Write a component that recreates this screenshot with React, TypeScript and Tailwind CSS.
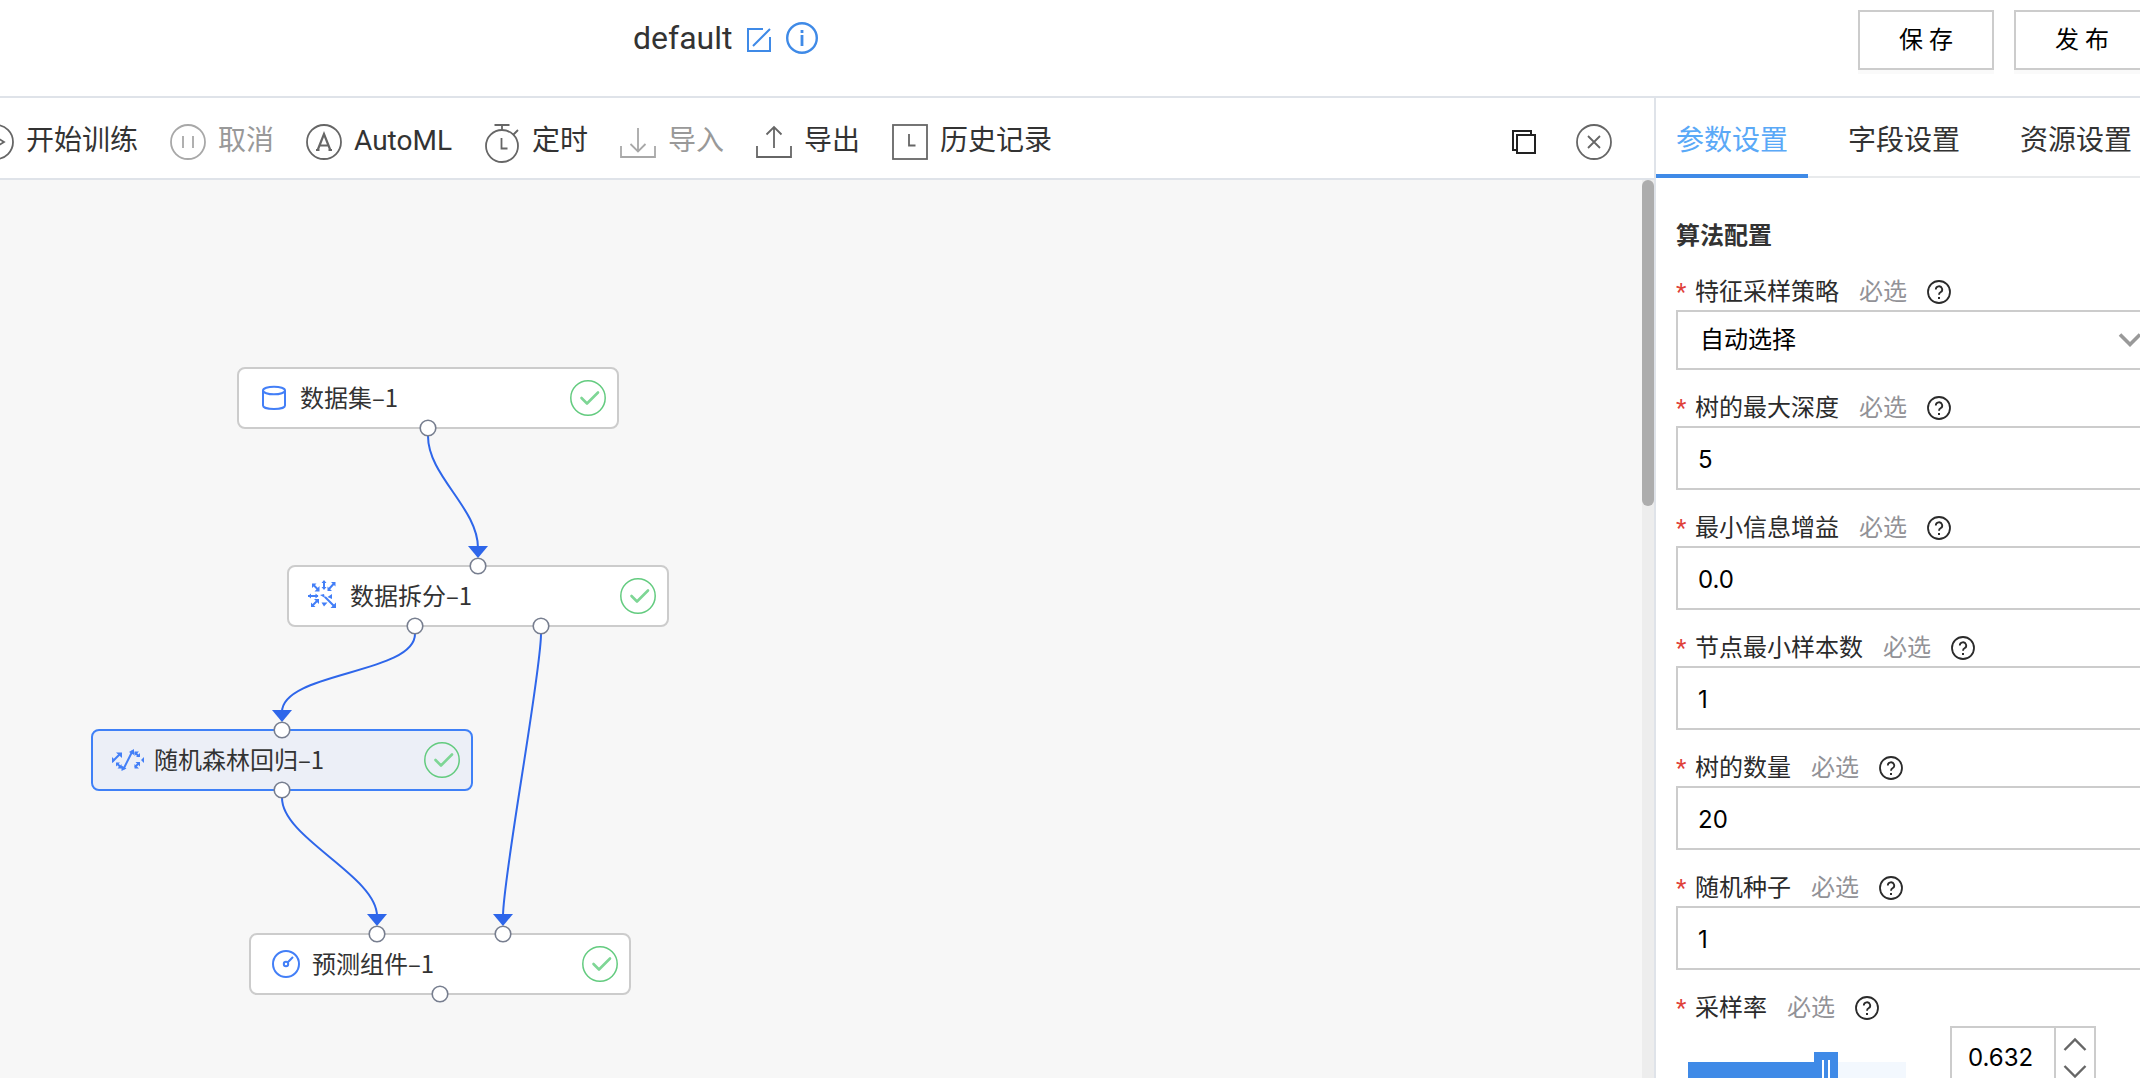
import { useState } from "react";
import type { ReactNode } from "react";

interface ToolItem {
  label: string;
  icon: ReactNode;
  disabled?: boolean;
}

interface FlowNode {
  id: string;
  label: string;
  x: number;
  y: number;
  icon: ReactNode;
  selected?: boolean;
}

const toolItems: ToolItem[] = [
  {
    label: "开始训练",
    icon: (
      <>
        <circle cx="18" cy="18" r="17" />
        <path d="M14 10.500v15L26 18z" />
      </>
    ),
  },
  {
    label: "取消",
    disabled: true,
    icon: (
      <>
        <circle cx="18" cy="18" r="17" />
        <path d="M13 12v12M23 12v12" />
      </>
    ),
  },
  {
    label: "AutoML",
    icon: (
      <>
        <circle cx="18" cy="18" r="17" />
        <path d="M11.500 26.500L18 10l6.500 16.500M14 21.500h8M10 26h3.500M22.500 26H26" strokeWidth="2.2" />
      </>
    ),
  },
  {
    label: "定时",
    icon: (
      <>
        <circle cx="18" cy="22" r="16" />
        <path d="M10.500 1h15M18 1v5M29 11l5-5M17.500 14v10.500h6" />
      </>
    ),
  },
  {
    label: "导入",
    disabled: true,
    icon: <path d="M1 22v11h34V22M18 4v23M10.500 20l7.500 7.500 7.500-7.500" />,
  },
  {
    label: "导出",
    icon: <path d="M1 22v11h34V22M18 24V3M10.500 10.500L18 3l7.500 7.500" />,
  },
  {
    label: "历史记录",
    icon: (
      <>
        <rect x="1" y="1" width="34" height="34" />
        <path d="M17 10v11.500h6.500" />
      </>
    ),
  },
];

const tabs = ["参数设置", "字段设置", "资源设置"];

const numberFields = [
  { id: "max-depth", label: "树的最大深度", value: "5" },
  { id: "min-gain", label: "最小信息增益", value: "0.0" },
  { id: "min-samples", label: "节点最小样本数", value: "1" },
  { id: "tree-count", label: "树的数量", value: "20" },
  { id: "seed", label: "随机种子", value: "1" },
];

const nodes: FlowNode[] = [
  {
    id: "dataset",
    label: "数据集–1",
    x: 237,
    y: 187,
    icon: (
      <>
        <ellipse cx="16" cy="8.500" rx="11" ry="3.800" />
        <path d="M5 8.500v15c0 2 4.900 3.500 11 3.500s11-1.500 11-3.500v-15" />
      </>
    ),
  },
  {
    id: "split",
    label: "数据拆分–1",
    x: 287,
    y: 385,
    icon: (
      <>
        <path d="M16 1v8M20.500 9.500l5.500-6M5 4.500l5.500 5.500M0 16h10M4 26l6-6M17 17l9.500 9.500" />
        <path
          d="M13.500 3L16 0l2.500 3zM13.500 7h5L16 10zM27.500 2v4.500L23 2zM19.500 6.500v4.500H24zM4 3.500h4.500L4 8zM11.500 6v5.500H6.500zM3 13.500L0 16l3 2.500zM7.500 13.500v5L10.500 16zM6 19h5v5zM3 22.500V27h4.500zM28 22.500V28h-5.500zM19.500 17l4.500-3v5zM13.500 22.500h6l-3.500 4zM12 15l4-1 1 4z"
          fill="currentColor"
          stroke="none"
        />
      </>
    ),
  },
  {
    id: "forest",
    label: "随机森林回归–1",
    x: 91,
    y: 549,
    selected: true,
    icon: (
      <>
        <path d="M0 18l8-8M5 19.500l4 4M11.500 25l9-18M23 8.500l4 4M23 23l4-4" />
        <path
          d="M0 13v6l3-3zM4 8.500h6V14zM4 18.500h4L4 22.500zM9.500 20v4.500H5.500zM17 8l5-3v6zM9.500 21.500v5.500l5-2.500zM22.500 7.500H27l-4.500 4.500zM28 9v4h-4zM28 18v4.500L23.500 18zM22.500 20v4.500H27zM32 13v6l-3-3z"
          fill="currentColor"
          stroke="none"
        />
      </>
    ),
  },
  {
    id: "predict",
    label: "预测组件–1",
    x: 249,
    y: 753,
    icon: (
      <>
        <circle cx="16" cy="16" r="13" />
        <circle cx="16" cy="16" r="2.200" />
        <path d="M17.800 14.200L23 9" />
      </>
    ),
  },
];

// source x/y, target x/y in canvas coordinates
const edges = [
  { x1: 428, y1: 256, x2: 478, y2: 378 },
  { x1: 415, y1: 454, x2: 282, y2: 542 },
  { x1: 541, y1: 454, x2: 503, y2: 746 },
  { x1: 282, y1: 618, x2: 377, y2: 746 },
];

const ports = [
  [428, 248],
  [478, 386],
  [415, 446],
  [541, 446],
  [282, 550],
  [282, 610],
  [377, 754],
  [503, 754],
  [440, 814],
];

const HANDLE = 40;

function edgePath(x1: number, y1: number, x2: number, y2: number) {
  const end = y2 - 10;
  return `M${x1} ${y1}C${x1} ${y1 + HANDLE} ${x2} ${end - HANDLE} ${x2} ${end}`;
}

function FieldLabel({ htmlFor, text }: { htmlFor: string; text: string }) {
  return (
    <div className="flex h-9 items-center text-2xl leading-9 text-[#2b2b2b]">
      <span className="w-[19px] text-[#e0413a]">*</span>
      <label htmlFor={htmlFor}>{text}</label>
      <span className="ml-5 text-[#929297]">必选</span>
      <button type="button" aria-label={`${text}说明`} className="ml-5">
        <svg viewBox="0 0 24 24" className="size-6" fill="none" stroke="currentColor" strokeWidth="1.8">
          <circle cx="12" cy="12" r="11" />
          <path d="M8.800 9.500a3.200 3.200 0 1 1 4.700 2.800c-1 .6-1.500 1.100-1.500 2.400" />
          <path d="M12 17v2" strokeWidth="2" />
        </svg>
      </button>
    </div>
  );
}

function Toolbar() {
  return (
    <div className="flex h-[82px] shrink-0 items-center border-b-2 border-[#dfe3e9] bg-white pt-2 pr-[42px]">
      <div className="-ml-6 flex items-center gap-8 pl-0.5">
        {toolItems.map((item) => (
          <button
            key={item.label}
            type="button"
            disabled={item.disabled}
            className={`flex min-w-[104px] shrink-0 items-center gap-3 ${item.disabled ? "text-[#a8a8a8]" : "text-[#666]"}`}
          >
            <svg viewBox="0 0 36 36" className="size-9 overflow-visible" fill="none" stroke="currentColor" strokeWidth="1.8">
              {item.icon}
            </svg>
            <span className={`pb-0.5 text-[28px] leading-9 ${item.disabled ? "text-[#999]" : "text-[#333]"}`}>
              {item.label}
            </span>
          </button>
        ))}
      </div>
      <div className="ml-auto flex items-center gap-10">
        <button type="button" aria-label="复制" className="text-[#222]">
          <svg viewBox="0 0 24 24" className="size-6" fill="none" stroke="currentColor" strokeWidth="2">
            <path d="M4 20H1V1h18v3" />
            <rect x="5" y="5" width="18" height="18" />
          </svg>
        </button>
        <button type="button" aria-label="关闭" className="text-[#666]">
          <svg viewBox="0 0 36 36" className="size-9" fill="none" stroke="currentColor" strokeWidth="1.800">
            <circle cx="18" cy="18" r="17" />
            <path d="M12 12l12 12M24 12L12 24" />
          </svg>
        </button>
      </div>
    </div>
  );
}

function Canvas() {
  return (
    <div className="flex min-h-0 flex-1 bg-[#f7f7f7]">
      <div className="relative flex-1 overflow-hidden">
        {nodes.map((node) => (
          <div
            key={node.id}
            style={{ left: node.x, top: node.y }}
            className={`absolute flex h-[62px] w-[382px] items-center rounded-lg border-2 pr-[11px] pl-[19px] ${
              node.selected ? "border-[#3f80f7] bg-[#eceff7]" : "border-[#ccc] bg-white"
            }`}
          >
            <svg viewBox="0 0 32 32" className="size-8 shrink-0 text-[#437ff7]" fill="none" stroke="currentColor" strokeWidth="2">
              {node.icon}
            </svg>
            <span className="ml-2.5 flex-1 pb-0.5 font-['Noto_Sans_CJK_SC',sans-serif] text-2xl leading-9 text-[#333]">
              {node.label}
            </span>
            <svg viewBox="0 0 36 36" className="size-9 shrink-0" fill="none" strokeLinecap="round" strokeLinejoin="round">
              <circle cx="18" cy="18" r="17.200" stroke="#63cb7f" strokeWidth="1.500" />
              <path d="M11.500 18l5.500 5.500L28 12.500" stroke="#7ed695" strokeWidth="2.600" />
            </svg>
          </div>
        ))}
        <svg className="pointer-events-none absolute inset-0 size-full" fill="none">
          {edges.map((e) => (
            <g key={`${e.x1}-${e.x2}`}>
              <path d={edgePath(e.x1, e.y1, e.x2, e.y2)} stroke="#2e66ea" strokeWidth="2" />
              <path d={`M${e.x2 - 10} ${e.y2 - 12}h20l-10 12z`} fill="#2e66ea" />
            </g>
          ))}
          {ports.map(([x, y]) => (
            <circle key={`${x}-${y}`} cx={x} cy={y} r="7.800" fill="#fff" stroke="#777e8f" strokeWidth="1.600" />
          ))}
        </svg>
      </div>
      <div className="w-3 bg-[#ededed]">
        <div className="h-[326px] rounded-full bg-[#adadad]" />
      </div>
    </div>
  );
}

function SampleRate() {
  const [rate, setRate] = useState(0.632);
  return (
    <div className="flex items-start">
      <div className="relative mt-[26px] w-[242px] px-3 pt-2.5">
        <div className="h-6 bg-[#f3f8fe]">
          <div className="h-full bg-[#3f8ae7]" style={{ width: `${rate * 100}%` }} />
        </div>
        <input
          id="sample-rate"
          type="range"
          min={0}
          max={1}
          step={0.001}
          value={rate}
          onChange={(e) => setRate(Number(e.target.value))}
          className="absolute inset-x-0 top-0 h-11 w-full appearance-none bg-transparent [&::-webkit-slider-thumb]:h-11 [&::-webkit-slider-thumb]:w-6 [&::-webkit-slider-thumb]:appearance-none [&::-webkit-slider-thumb]:border-y-8 [&::-webkit-slider-thumb]:border-[#3f8ae7] [&::-webkit-slider-thumb]:bg-[linear-gradient(to_right,#3f8ae7_8px,#fff_8px,#fff_10px,#3f8ae7_10px,#3f8ae7_14px,#fff_14px,#fff_16px,#3f8ae7_16px)]"
        />
      </div>
      <div className="ml-8 flex h-16 w-[146px] border-2 border-[#ccc]">
        <input
          aria-label="采样率数值"
          value={rate}
          onChange={(e) => setRate(Number(e.target.value) || 0)}
          className="w-[102px] pl-4 font-[Inter] text-2xl text-black outline-none"
        />
        <div className="flex flex-1 flex-col items-center justify-between border-l-2 border-[#ccc] py-2 text-[#666]">
          <button type="button" aria-label="增加" onClick={() => setRate(Math.min(1, rate + 0.001))}>
            <svg viewBox="0 0 24 16" className="h-4 w-6" fill="none" stroke="currentColor" strokeWidth="2.400">
              <path d="M1.500 14L12 3.500 22.500 14" />
            </svg>
          </button>
          <button type="button" aria-label="减少" onClick={() => setRate(Math.max(0, rate - 0.001))}>
            <svg viewBox="0 0 24 16" className="h-4 w-6" fill="none" stroke="currentColor" strokeWidth="2.400">
              <path d="M1.500 2L12 12.500 22.500 2" />
            </svg>
          </button>
        </div>
      </div>
    </div>
  );
}

function SettingsPanel() {
  const [active, setActive] = useState(tabs[0]);
  return (
    <aside className="w-[486px] shrink-0 overflow-hidden border-l-2 border-[#dfe3e9] bg-white">
      <div role="tablist" className="-mr-5 flex h-20 gap-5 border-b-2 border-[#e8eaec]">
        {tabs.map((tab) => (
          <button
            key={tab}
            type="button"
            role="tab"
            aria-selected={tab === active}
            onClick={() => setActive(tab)}
            className={`-mb-0.5 shrink-0 border-b-4 px-5 pt-2.5 text-[28px] leading-9 ${
              tab === active ? "border-[#3f8ae7] text-[#5aa9f7]" : "border-transparent text-[#333]"
            }`}
          >
            {tab}
          </button>
        ))}
      </div>

      <form className="-mr-5 flex flex-col gap-5 pt-10 pl-5">
        <h2 className="text-2xl leading-9 font-bold text-[#333]">算法配置</h2>

        <div>
          <FieldLabel htmlFor="strategy" text="特征采样策略" />
          <div className="relative">
            <select
              id="strategy"
              className="block h-[60px] w-full appearance-none border-2 border-[#ccc] bg-white px-[22px] text-2xl text-black outline-none"
            >
              <option>自动选择</option>
            </select>
            <svg
              viewBox="0 0 24 16"
              className="pointer-events-none absolute top-[22px] right-[18px] h-4 w-6"
              fill="none"
              stroke="#999"
              strokeWidth="3.600"
            >
              <path d="M2 2.500l10 10 10-10" />
            </svg>
          </div>
        </div>

        {numberFields.map((field) => (
          <div key={field.id}>
            <FieldLabel htmlFor={field.id} text={field.label} />
            <input
              id={field.id}
              defaultValue={field.value}
              className="block h-16 w-full border-2 border-[#ccc] px-5 pt-0.5 font-[Inter] text-2xl text-black outline-none"
            />
          </div>
        ))}

        <div>
          <FieldLabel htmlFor="sample-rate" text="采样率" />
          <SampleRate />
        </div>
      </form>
    </aside>
  );
}

export default function App() {
  return (
    <div className="flex h-screen flex-col overflow-hidden bg-white font-[Roboto,'Noto_Sans_CJK_SC',sans-serif]">
      <header className="flex h-[98px] shrink-0 items-start border-b-2 border-[#dfe3e9] pl-[633px]">
        <div className="flex items-center gap-3.5 pt-5">
          <h1 className="text-[32px] leading-9 text-[#333]">default</h1>
          <button type="button" aria-label="编辑名称" className="pt-1 text-[#3f8ae7]">
            <svg viewBox="0 0 26 26" className="size-[26px]" fill="none" stroke="currentColor" strokeWidth="2">
              <path d="M17 2H2v22h22V10M7 19L24 2" />
            </svg>
          </button>
          <button type="button" aria-label="信息" className="text-[#3f8ae7]">
            <svg viewBox="0 0 32 32" className="size-8" fill="none" stroke="currentColor" strokeWidth="2.400">
              <circle cx="16" cy="16" r="14.800" />
              <path d="M16 13v11M16 8v3" strokeWidth="2.800" />
            </svg>
          </button>
        </div>
        <div className="-mr-2.5 ml-auto flex gap-5 pt-2.5">
          <button type="button" className="h-[60px] w-[136px] border-2 border-[#ccc] text-2xl text-black shadow-[0_4px_0_#fafafa]">
            保 存
          </button>
          <button type="button" className="h-[60px] w-[136px] border-2 border-[#ccc] text-2xl text-black shadow-[0_4px_0_#fafafa]">
            发 布
          </button>
        </div>
      </header>

      <div className="flex min-h-0 flex-1">
        <main className="flex min-w-0 flex-1 flex-col">
          <Toolbar />
          <Canvas />
        </main>
        <SettingsPanel />
      </div>
    </div>
  );
}
